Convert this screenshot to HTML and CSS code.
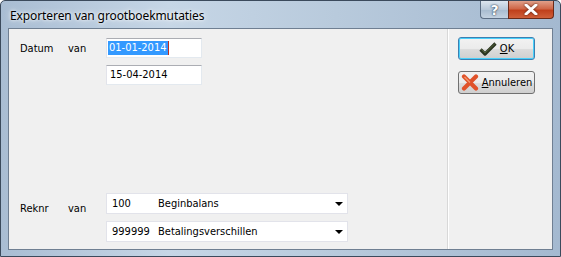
FILE: index.html
```html
<!DOCTYPE html>
<html lang="nl">
<head>
  <meta charset="UTF-8">
  <title>Exporteren van grootboekmutaties</title>
  <link rel="stylesheet" href="styles.css">
</head>
<body>
  <div class="window">
    <!-- Title bar -->
    <div class="titlebar">
      <span class="title">Exporteren van grootboekmutaties</span>
      <div class="caption-buttons">
        <div class="cap help">?</div>
        <div class="cap close">
          <svg width="14" height="11" viewBox="0 0 14 11"><path d="M2 1 L12 10 M12 1 L2 10" stroke="#fff" stroke-width="3" stroke-linecap="round"/></svg>
        </div>
      </div>
    </div>

    <!-- Client area -->
    <div class="client">
      <div class="form">
        <div class="row">
          <span class="lbl">Datum</span>
          <span class="van">van</span>
          <div class="fields">
            <div class="textbox"><span class="sel">01-01-2014</span><span class="caret"></span></div>
            <div class="textbox">15-04-2014</div>
          </div>
        </div>

        <div class="row bottom">
          <span class="lbl">Reknr</span>
          <span class="van">van</span>
          <div class="fields">
            <div class="combo"><span class="code">100</span><span class="name">Beginbalans</span><span class="arrow"></span></div>
            <div class="combo"><span class="code">999999</span><span class="name">Betalingsverschillen</span><span class="arrow"></span></div>
          </div>
        </div>
      </div>

      <div class="side">
        <button type="button" class="btn default">
          <svg width="18" height="14" viewBox="0 0 18 14"><path d="M1.5 7.5 L6 12 L16.5 1.5" fill="none" stroke="#2a3320" stroke-width="3.2" stroke-linejoin="round"/><path d="M2.2 7.4 L6 11.1 L15.8 1.9" fill="none" stroke="#56663a" stroke-width="1"/></svg>
          <span><u>O</u>K</span>
        </button>
        <button type="button" class="btn">
          <svg width="18" height="17" viewBox="0 0 18 17"><path d="M3 2.5 L15 14.5 M15 2.5 L3 14.5" stroke="#e0522a" stroke-width="4.2" stroke-linecap="round"/><path d="M3.5 3 L9 8.5" stroke="#f49a70" stroke-width="1.2"/></svg>
          <span><u>A</u>nnuleren</span>
        </button>
      </div>
    </div>
  </div>
</body>
</html>
```

FILE: styles.css
```css
body {
  margin: 0;
  font-family: "Liberation Sans", Arial, sans-serif;
  background: #ffffff;
}
.window {
  width: 561px;
  height: 257px;
  box-sizing: border-box;
  border: 1px solid #3b4a5c;
  border-radius: 5px 5px 0 0;
  background: linear-gradient(90deg, #a9bdd3 0%, #c6d6e6 30%, #b8cadc 60%, #a4b9d0 100%);
  display: flex;
  flex-direction: column;
}
.titlebar {
  height: 27px;
  display: flex;
  justify-content: space-between;
  align-items: flex-start;
  padding-left: 9px;
}
.title {
  font-family: "Noto Sans", "Open Sans", sans-serif;
  font-size: 12px;
  letter-spacing: -0.1px;
  color: #000;
  margin-top: 6px;
  text-shadow: 0 0 6px #ffffff, 0 0 3px #ffffff;
}
.caption-buttons {
  display: flex;
  margin-right: 6px;
}
.cap {
  height: 18px;
  box-sizing: border-box;
  border: 1px solid #5c6e84;
  border-top: none;
  display: flex;
  align-items: center;
  justify-content: center;
}
.help {
  width: 28px;
  border-radius: 0 0 0 4px;
  background: linear-gradient(#dde6ef, #b8c8d9 50%, #a7bbcf 51%, #c3d2e1);
  color: #fff;
  font-weight: bold;
  font-size: 14px;
  font-family: "DejaVu Sans", sans-serif;
  text-shadow: 0 0 2px #2b3b50, 0 0 1px #2b3b50;
  border-right: none;
}
.close {
  width: 46px;
  border-radius: 0 0 4px 0;
  background: linear-gradient(#e0a08a, #cf6748 45%, #c0401c 55%, #d0603a);
  border-color: #6b2a18;
}
.close svg {
  filter: drop-shadow(0 0 1px #4a1a0c);
}
.client {
  flex: 1;
  margin: 0 7px 6px 7px;
  border: 1px solid #6f7f92;
  background: #f0f0f0;
  display: flex;
  font-family: "DejaVu Sans Condensed", "DejaVu Sans", sans-serif;
  font-size: 11px;
  color: #000;
}
.form {
  flex: 1;
  display: flex;
  flex-direction: column;
  padding: 9px 0 7px 11px;
}
.row {
  display: flex;
  align-items: flex-start;
}
.row.bottom {
  margin-top: auto;
}
.lbl {
  width: 48px;
}
.van {
  width: 38px;
}
.row .lbl, .row .van {
  margin-top: 4px;
}
.row.bottom .lbl, .row.bottom .van {
  margin-top: 9px;
}
.fields {
  display: flex;
  flex-direction: column;
  gap: 7px;
}
.textbox {
  width: 96px;
  height: 20px;
  box-sizing: border-box;
  border: 1px solid #abadb3;
  border-color: #abadb3 #e3e9ef #e3e9ef #e2e3ea;
  background: #fff;
  padding: 2px 0 0 1px;
  display: flex;
}
.sel {
  background: #3399ff;
  color: #fff;
  height: 14px;
  padding: 0 1px;
}
.caret {
  width: 1px;
  height: 14px;
  background: #c03020;
}
.textbox + .textbox {
  padding-left: 3px;
}
.combo {
  width: 242px;
  height: 21px;
  box-sizing: border-box;
  border: 1px solid #e2e3ea;
  background: #fff;
  display: flex;
  align-items: center;
  padding-left: 5px;
}
.code {
  width: 46px;
}
.name {
  flex: 1;
}
.arrow {
  width: 0;
  height: 0;
  border-left: 4px solid transparent;
  border-right: 4px solid transparent;
  border-top: 4px solid #000;
  margin-right: 4px;
}
.side {
  width: 104px;
  border-left: 1px solid #ffffff;
  box-shadow: -1px 0 0 #d8d8d8;
  display: flex;
  flex-direction: column;
  align-items: flex-start;
  gap: 11px;
  padding: 8px 0 0 9px;
  box-sizing: border-box;
}
.btn {
  width: 77px;
  height: 23px;
  box-sizing: border-box;
  border: 1px solid #707070;
  border-radius: 3px;
  background: linear-gradient(#f2f2f2 0%, #ebebeb 50%, #dddddd 51%, #cfcfcf 100%);
  font-family: "DejaVu Sans Condensed", "DejaVu Sans", sans-serif;
  font-size: 11px;
  color: #000;
  display: flex;
  align-items: center;
  justify-content: center;
  gap: 3px;
  padding: 0;
}
.btn.default {
  border-color: #3c7fb1;
  box-shadow: inset 0 0 0 1px #48d0fb;
}
```
